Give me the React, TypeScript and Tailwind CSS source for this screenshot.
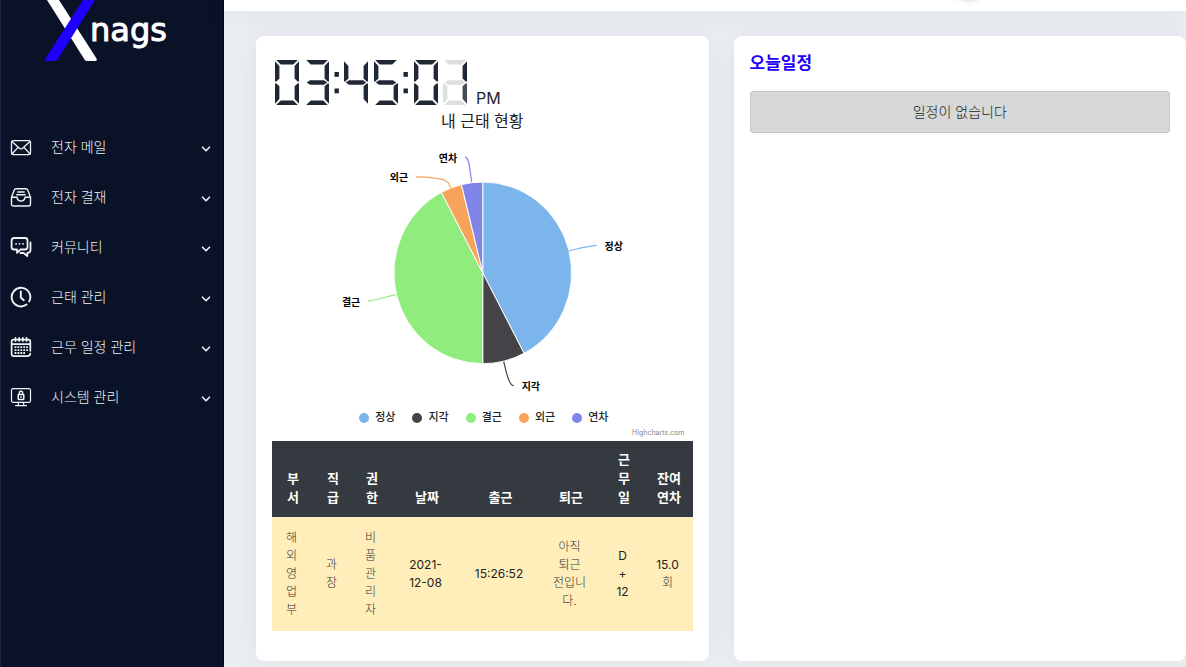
import React from "react";

type Segment = "a" | "b" | "c" | "d" | "e" | "f" | "g";

const SEGMENT_POINTS: Record<Segment, string> = {
  a: "1.2,0 22.8,0 18.2,4.4 5.8,4.4",
  b: "24,1.2 24,21.6 22.6,21.6 19.6,18.6 19.6,6",
  c: "24,23.4 24,43.8 19.6,39 19.6,26.2 22.6,23.4",
  d: "1.2,45 22.8,45 18.2,40.6 5.8,40.6",
  e: "0,23.4 0,43.8 4.4,39 4.4,26.2 1.4,23.4",
  f: "0,1.2 0,21.6 1.4,21.6 4.4,18.6 4.4,6",
  g: "1.8,22.5 5,20.2 19,20.2 22.2,22.5 19,24.8 5,24.8",
};

const INK = "#202835";
const GHOST = "#dddee0";

const digit = (names: string): Partial<Record<Segment, string>> =>
  Object.fromEntries(names.split("").map((n) => [n, INK]));

const DIGITS = [
  { x: 0, segments: digit("abcdef") },
  { x: 30, segments: digit("abcdg") },
  { x: 69, segments: digit("bcfg") },
  { x: 99, segments: digit("acdfg") },
  { x: 139, segments: digit("abcdef") },
  { x: 168, segments: { a: GHOST, d: GHOST, e: GHOST, g: GHOST, b: INK, c: "#464c57" } },
];

function Clock() {
  return (
    <svg role="img" aria-label="03:45:01" width="193" height="45" viewBox="0 0 193 45" className="self-start">
      {DIGITS.map((d) => (
        <g key={d.x} transform={`translate(${d.x} 0)`}>
          {Object.entries(d.segments).map(([name, fill]) => (
            <polygon key={name} points={SEGMENT_POINTS[name as Segment]} fill={fill} />
          ))}
        </g>
      ))}
      {[59.5, 128.5].map((x) => (
        <g key={x} fill={INK}>
          <rect x={x} y="12" width="4.4" height="4.8" />
          <rect x={x} y="28.5" width="4.4" height="4.8" />
        </g>
      ))}
    </svg>
  );
}

const SLICES = [
  { name: "정상", value: 11, color: "#7cb5ec" },
  { name: "지각", value: 2, color: "#434348" },
  { name: "결근", value: 11, color: "#90ed7d" },
  { name: "외근", value: 1, color: "#f7a35c" },
  { name: "연차", value: 1, color: "#8085e9" },
];

const LABELS = [
  { name: "정상", x: 333, y: 105, line: "M297 106 C306 104 316 101 325 100.5" },
  { name: "지각", x: 250, y: 245, line: "M232 217 C235 229 237 240 242 241" },
  { name: "결근", x: 70, y: 161, line: "M96 156 C108 155 116 151 124 150" },
  { name: "외근", x: 118, y: 36, line: "M144 32 C158 32 171 34 174 36 C178 38 177 40 179 43" },
  { name: "연차", x: 167, y: 17, line: "M193 12 C198 12 198 27 200 37" },
];

function PieChart() {
  const total = SLICES.reduce((sum, s) => sum + s.value, 0);
  const cx = 211;
  const cy = 128;
  const point = (turn: number) => {
    const angle = turn * 2 * Math.PI;
    return `${cx + 89 * Math.sin(angle)} ${cy - 91 * Math.cos(angle)}`;
  };
  let start = 0;
  return (
    <svg role="img" aria-label="내 근태 현황" viewBox="0 0 421 260" className="mt-[14px] block w-full">
      {SLICES.map((s) => {
        const from = start / total;
        start += s.value;
        return (
          <path
            key={s.name}
            d={`M${cx} ${cy} L${point(from)} A89 91 0 0 1 ${point(start / total)} Z`}
            fill={s.color}
            stroke="#fff"
            strokeWidth="1"
            strokeLinejoin="round"
          />
        );
      })}
      {LABELS.map((l, i) => (
        <g key={l.name}>
          <path d={l.line} fill="none" stroke={SLICES[i].color} strokeWidth="1.2" />
          <text x={l.x} y={l.y} className="fill-black text-[10px] font-bold">
            {l.name}
          </text>
        </g>
      ))}
    </svg>
  );
}

function Icon({ children, width = 1.4 }: { children: React.ReactNode; width?: number }) {
  return (
    <svg
      aria-hidden="true"
      width="22"
      height="22"
      viewBox="0 0 22 22"
      fill="none"
      stroke="#f1f3f6"
      strokeWidth={width}
      strokeLinecap="round"
      strokeLinejoin="round"
      className="shrink-0"
    >
      {children}
    </svg>
  );
}

const MENU = [
  {
    label: "전자 메일",
    icon: (
      <Icon width={1.3}>
        <rect x="1.5" y="4.6" width="19" height="14" rx="2" />
        <path d="M2 5.4 L9.7 12.4 Q11 13.4 12.3 12.4 L20 5.4 M2 18 L8 11.4 M20 18 L14 11.4" />
      </Icon>
    ),
  },
  {
    label: "전자 결재",
    icon: (
      <Icon>
        <path d="M1.5 11.3 L4.3 4 Q4.8 2.7 6.2 2.7 H15.8 Q17.2 2.7 17.7 4 L20.5 11.3 V18 Q20.5 20 18.5 20 H3.5 Q1.5 20 1.5 18 Z" />
        <path d="M1.5 11.3 H7 Q7.6 15 11 15 Q14.4 15 15 11.3 H20.5 M7.8 6 H14.2 M6.8 8.7 H15.2" />
      </Icon>
    ),
  },
  {
    label: "커뮤니티",
    icon: (
      <Icon width={1.8}>
        <path d="M4 2 H15 Q17.5 2 17.5 4.5 V11 Q17.5 13.5 15 13.5 H10.5 L7 16.8 V13.5 H4 Q1.6 13.5 1.6 11 V4.5 Q1.6 2 4 2 Z" />
        <path d="M20.5 6.5 V14 Q20.5 16.3 18 16.8 H17.3 V20 L13.5 17 H10.5" />
        <path d="M6 7.8 H6.1 M9.5 7.8 H9.6 M13 7.8 H13.1" />
      </Icon>
    ),
  },
  {
    label: "근태 관리",
    icon: (
      <Icon width={1.9}>
        <path d="M16.5 18.6 A9.3 9.3 0 1 1 19.3 15.3" />
        <path d="M10.8 5.5 V11.5 L13.8 14.2" />
      </Icon>
    ),
  },
  {
    label: "근무 일정 관리",
    icon: (
      <Icon width={1.7}>
        <path d="M20.3 14.8 V5.5 Q20.3 3.6 18.3 3.6 H3.6 Q1.6 3.6 1.6 5.5 V18 Q1.6 20.2 3.8 20.2 H17 Q20.3 20.2 20.3 17.6 M1.6 8.2 H20.3" />
        <path d="M5.5 1.9 V5 M9.2 1.9 V5 M12.9 1.9 V5 M16.6 1.9 V5" />
        <path
          d="M4.6 11.2 H18 M4.6 14.1 H18 M4.6 17 H15"
          strokeWidth="1.8"
          strokeLinecap="butt"
          strokeDasharray="1.8 1.1"
        />
      </Icon>
    ),
  },
  {
    label: "시스템 관리",
    icon: (
      <Icon width={1.2}>
        <rect x="1.5" y="2.7" width="19" height="13.6" rx="1.5" />
        <path d="M8.8 16.4 L8 19.4 M13.2 16.4 L14 19.4 M5.5 19.6 H16.5" />
        <rect x="8.2" y="8.6" width="5.6" height="4.8" rx="0.6" strokeWidth="1.5" />
        <path d="M9.3 8.4 V7 A1.7 1.7 0 0 1 12.7 7 V8.4 M11 10.6 V11.4" strokeWidth="1.4" />
      </Icon>
    ),
  },
];

function Sidebar() {
  return (
    <aside className="w-56 shrink-0 border-x border-l-[#1c2540] border-r-[#050a1a] bg-[#0a1228]">
      <a href="#home" aria-label="Xnags" className="ml-11 flex h-[61px] items-start">
        <svg aria-hidden="true" width="53" height="61" viewBox="0 0 53 61" className="shrink-0">
          <path d="M2 0 H14 L51.5 58.5 Q52.5 61 50 61 H42 Q40.5 61 39.5 59.5 Z" fill="#fff" />
          <path d="M38 0 H50 L13 59 Q11.5 61 10 61 H2 Q-0.5 61 0.5 58.5 Z" fill="#1f00ff" />
        </svg>
        <span className="-ml-2 mt-[10px] font-['DejaVu_Sans'] text-[32px] leading-10 text-white [-webkit-text-stroke:1px_white]">
          nags
        </span>
      </a>
      <nav className="mt-[61px]">
        <ul>
          {MENU.map((item) => (
            <li key={item.label}>
              <button
                type="button"
                className="flex h-[50px] w-full items-center pl-[9px] pr-3 text-left text-sm font-light text-[#f1f3f6]"
              >
                {item.icon}
                <span className="ml-[19px] flex-1">{item.label}</span>
                <svg
                  aria-hidden="true"
                  width="10"
                  height="10"
                  viewBox="0 0 10 10"
                  fill="none"
                  stroke="#f1f3f6"
                  strokeWidth="1.6"
                  strokeLinecap="round"
                  strokeLinejoin="round"
                  className="mt-1"
                >
                  <path d="M1.5 3.2 L5 6.7 L8.5 3.2" />
                </svg>
              </button>
            </li>
          ))}
        </ul>
      </nav>
    </aside>
  );
}

const hangul = (text: string) => <span className="font-light text-[#333]">{text}</span>;

const COLUMNS: { head: string; width: string; cell: React.ReactNode }[] = [
  { head: "부서", width: "w-[41px]", cell: hangul("해외영업부") },
  { head: "직급", width: "w-[39px]", cell: hangul("과장") },
  { head: "권한", width: "w-[39px]", cell: hangul("비품관리자") },
  { head: "날짜", width: "w-[71px]", cell: "2021-12-08" },
  { head: "출근", width: "w-[76px]", cell: "15:26:52" },
  { head: "퇴근", width: "w-[65px]", cell: hangul("아직 퇴근 전입니다.") },
  { head: "근무일", width: "w-[41px]", cell: "D + 12" },
  { head: "잔여연차", width: "w-[49px]", cell: <>15.0 {hangul("회")}</> },
];

function AttendanceTable() {
  return (
    <table className="mt-[2px] w-full table-fixed border-collapse text-center wrap-anywhere break-keep">
      <thead className="bg-[#343a40] text-[13px] leading-[19px] font-bold text-white">
        <tr>
          {COLUMNS.map((c) => (
            <th key={c.head} scope="col" className={`${c.width} pt-[9px] pr-[11px] pb-[10px] pl-3 align-bottom`}>
              {c.head}
            </th>
          ))}
        </tr>
      </thead>
      <tbody className="bg-[#ffeeba] text-xs leading-[18px] text-[#222]">
        <tr>
          {COLUMNS.map((c) => (
            <td key={c.head} className="py-3 pr-[13px] pl-[11px]">
              {c.cell}
            </td>
          ))}
        </tr>
      </tbody>
    </table>
  );
}

export default function App() {
  return (
    <div className="flex min-h-screen bg-[#ebeff3] font-['Inter','Noto_Sans_CJK_KR',sans-serif] text-[#212529]">
      <Sidebar />
      <div className="flex min-w-0 flex-1 flex-col">
        <header className="relative h-[11px] bg-white shadow-[0_4px_24px_rgba(0,0,0,0.08)]">
          <div className="absolute inset-0 overflow-hidden">
            <span className="absolute -top-10 right-[197px] size-10 rounded-full bg-[#d9a5ac] shadow-[0_0_5px_rgba(130,80,90,0.35)]" />
          </div>
        </header>
        <main className="grid flex-1 grid-cols-2 gap-[25px] pt-[25px] pb-[6px] pl-8">
          <section className="rounded-lg bg-white px-4 pt-6 pb-[30px] shadow-[0_0_28px_rgba(0,0,0,0.06)]">
            <div className="flex h-[47px] items-end pl-[3px]">
              <Clock />
              <span className="ml-2 text-base leading-[18px]">PM</span>
            </div>
            <h2 className="mt-1 text-center text-base leading-5">내 근태 현황</h2>
            <PieChart />
            <ul className="mt-[5px] flex h-4 items-center justify-center gap-[17px] pl-[3px] text-[11px] font-medium">
              {SLICES.map((s) => (
                <li key={s.name} className="flex items-center gap-[6px]">
                  <svg aria-hidden="true" width="10" height="10" viewBox="0 0 10 10">
                    <circle cx="5" cy="5" r="5" fill={s.color} />
                  </svg>
                  {s.name}
                </li>
              ))}
            </ul>
            <div className="mt-px flex justify-end pr-2 text-[7px] leading-3 text-[#888]">
              <a href="#highcharts">Highcharts.com</a>
            </div>
            <AttendanceTable />
          </section>
          <section className="rounded-lg bg-white px-4 pt-[17px] shadow-[0_0_28px_rgba(0,0,0,0.06)]">
            <h2 className="text-[17px] leading-5 font-bold text-[#1f00ff]">오늘일정</h2>
            <p className="mt-[18px] rounded-[3px] border border-[#c6c8ca] bg-[#d6d8d9] py-[10px] text-center text-sm leading-5 font-light text-[#1b1e21]">
              일정이 없습니다
            </p>
          </section>
        </main>
      </div>
    </div>
  );
}
